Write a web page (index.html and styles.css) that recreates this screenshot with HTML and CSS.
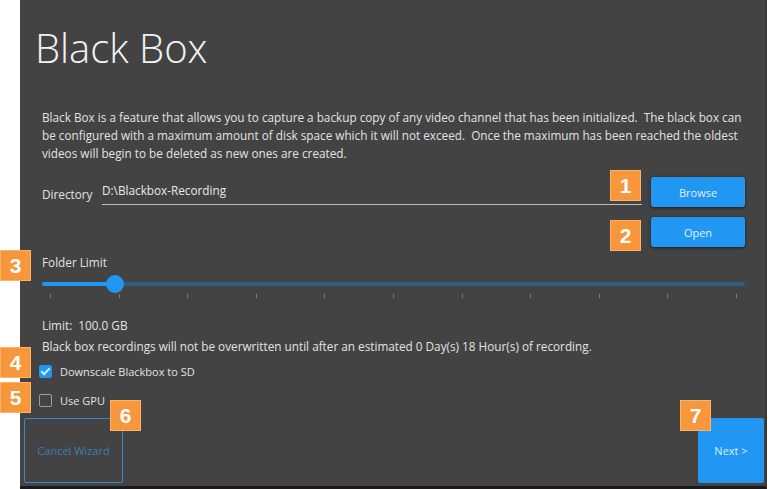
FILE: index.html
```html
<!DOCTYPE html>
<html lang="en">
<head>
  <meta charset="UTF-8" />
  <meta name="viewport" content="width=device-width, initial-scale=1.0" />
  <title>Black Box Wizard</title>
  <link rel="stylesheet" href="styles.css">
</head>
<body>
  <div class="wizard">
    <h1 class="title">Black Box</h1>
    <p class="intro">Black Box is a feature that allows you to capture a backup copy of any video channel that has been initialized.&nbsp; The black box can be configured with a maximum amount of disk space which it will not exceed.&nbsp; Once the maximum has been reached the oldest videos will begin to be deleted as new ones are created.</p>

    <!-- Directory row -->
    <div class="dir-row">
      <span class="dir-label">Directory</span>
      <div class="dir-input">D:\Blackbox-Recording</div>
      <div class="btn-col">
        <button class="btn">Browse</button>
        <button class="btn">Open</button>
      </div>
    </div>

    <!-- Folder limit slider -->
    <div class="limit-label">Folder Limit</div>
    <div class="slider">
      <div class="slider-fill"></div>
      <div class="slider-thumb"></div>
    </div>
    <div class="ticks">
      <span></span><span></span><span></span><span></span><span></span><span></span>
      <span></span><span></span><span></span><span></span><span></span>
    </div>

    <p class="limit-value">Limit:&nbsp; 100.0 GB</p>
    <p class="estimate">Black box recordings will not be overwritten until after an estimated 0 Day(s) 18 Hour(s) of recording.</p>

    <label class="check"><span class="box checked"></span>Downscale Blackbox to SD</label>
    <label class="check"><span class="box"></span>Use GPU</label>

    <div class="footer">
      <button class="cancel-btn">Cancel Wizard</button>
      <button class="next-btn">Next &gt;</button>
    </div>
  </div>

  <!-- Step markers -->
  <span class="marker m1">1</span>
  <span class="marker m2">2</span>
  <span class="marker m3">3</span>
  <span class="marker m4">4</span>
  <span class="marker m5">5</span>
  <span class="marker m6">6</span>
  <span class="marker m7">7</span>
</body>
</html>
```

FILE: styles.css
```css
/* Global */
body {
  margin: 0;
  padding: 0;
  background: #ffffff;
  font-family: "Open Sans", "Noto Sans", sans-serif;
  position: relative;
  height: 489px;
  overflow: hidden;
}

.wizard {
  margin-left: 20px;
  width: 747px;
  height: 489px;
  box-sizing: border-box;
  padding: 0 20px 0 22px;
  background: #434343;
  border-right: 2px solid #3a3a3a;
  border-bottom: 3px solid #1c1a1a;
  color: #e2e2e2;
  display: flex;
  flex-direction: column;
}
.wizard > * {
  flex-shrink: 0;
}

.title {
  margin: 22px 0 0 -7px;
  font-size: 40px;
  font-weight: 300;
  line-height: 52px;
  color: #f2f2f2;
}

.intro {
  margin: 34px 0 0 0;
  font-size: 11.75px;
  line-height: 18px;
}

/* Directory */
.dir-row {
  display: flex;
  margin-top: 15px;
}
.dir-label {
  font-size: 11.75px;
  margin-top: 9px;
  width: 60px;
}
.dir-input {
  width: 540px;
  height: 28px;
  box-sizing: border-box;
  padding-top: 5px;
  border-bottom: 1px solid #bdbdbd;
  font-size: 11.75px;
  color: #e8e8e8;
}
.btn-col {
  display: flex;
  flex-direction: column;
  gap: 10px;
  margin-left: 9px;
}
.btn {
  width: 94px;
  height: 30px;
  border: none;
  border-radius: 3px;
  background: #2196f3;
  color: #e3f2fd;
  font-family: inherit;
  font-size: 11px;
  box-shadow: 0 1px 3px rgba(0, 0, 0, 0.6);
}

/* Slider */
.limit-label {
  margin-top: 7px;
  font-size: 11.75px;
}
.slider {
  position: relative;
  height: 4px;
  margin-top: 12px;
  border-radius: 2px;
  background: #2d5d80;
}
.slider-fill {
  width: 74px;
  height: 4px;
  border-radius: 2px;
  background: #2196f3;
}
.slider-thumb {
  position: absolute;
  left: 64px;
  top: -7px;
  width: 18px;
  height: 18px;
  border-radius: 50%;
  background: #2196f3;
}
.ticks {
  display: flex;
  justify-content: space-between;
  padding: 0 8px 0 8px;
  margin-top: 8px;
}
.ticks span {
  width: 1px;
  height: 4px;
  background: #7a7a7a;
}

.limit-value {
  margin: 19px 0 0 0;
  font-size: 11.75px;
}
.estimate {
  margin: 5px 0 0 0;
  font-size: 11.75px;
}

/* Checkboxes */
.check {
  display: flex;
  align-items: center;
  font-size: 11px;
  margin-top: 10px;
  margin-left: -3px;
}
.check + .check {
  margin-top: 14px;
}
.box {
  width: 11px;
  height: 11px;
  border: 1px solid #9e9e9e;
  border-radius: 2px;
  margin-right: 8px;
  position: relative;
}
.box.checked {
  background: #2196f3;
  border-color: #2196f3;
}
.box.checked::after {
  content: "";
  position: absolute;
  left: 3px;
  top: 0px;
  width: 3px;
  height: 7px;
  border: solid #d9ecfb;
  border-width: 0 2px 2px 0;
  transform: rotate(45deg);
}

/* Footer buttons */
.footer {
  display: flex;
  justify-content: space-between;
  margin: auto -19px 3px -18px;
}
.cancel-btn {
  width: 99px;
  height: 65px;
  background: transparent;
  border: 1px solid #3a87c9;
  border-radius: 2px;
  color: #3c7db5;
  font-family: inherit;
  font-size: 11px;
}
.next-btn {
  width: 66px;
  height: 65px;
  border: none;
  border-radius: 2px;
  background: #2196f3;
  color: #dcefff;
  font-family: inherit;
  font-size: 11px;
}

/* Step markers overlaying the screenshot */
.marker {
  position: absolute;
  width: 29px;
  height: 29px;
  background: #f7963b;
  border: 1px solid #fbb26a;
  color: #ffffff;
  font-family: "Liberation Sans", Arial, sans-serif;
  font-weight: bold;
  font-size: 21px;
  line-height: 29px;
  text-align: center;
}
.m1 { left: 610px; top: 170px; }
.m2 { left: 610px; top: 220px; }
.m3 { left: 0; top: 250px; }
.m4 { left: 0; top: 347px; }
.m5 { left: 0; top: 382px; }
.m6 { left: 110px; top: 400px; }
.m7 { left: 680px; top: 400px; }
```
